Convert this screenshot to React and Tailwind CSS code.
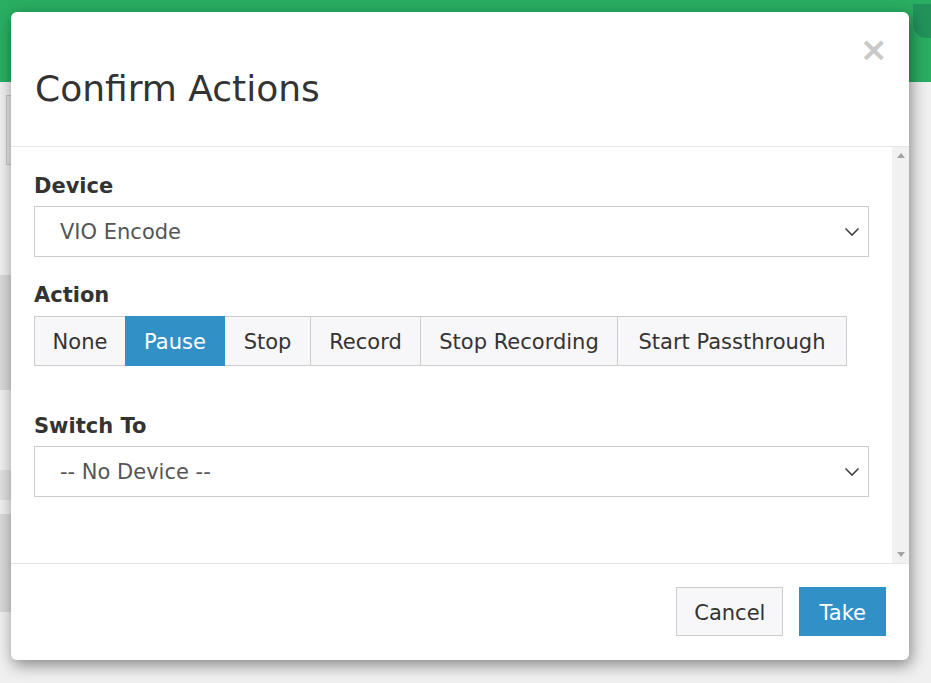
import React from "react";

const font = { fontFamily: '"DejaVu Sans", Verdana, sans-serif' };

function Chevron() {
  return (
    <svg width="16" height="10" viewBox="0 0 16 10" className="shrink-0">
      <path d="M1.5 1.5 L8 8 L14.5 1.5" fill="none" stroke="#444" strokeWidth="1.6" />
    </svg>
  );
}

function SelectBox({ value }) {
  return (
    <div className="h-[51px] border border-[#cccccc] bg-white flex items-center justify-between pl-[25px] pr-[8px] text-[21px] text-[#555555]">
      <span className="pt-[3px]">{value}</span>
      <Chevron />
    </div>
  );
}

const actions = [
  { label: "None", w: "w-[92px]" },
  { label: "Pause", w: "w-[100px]" },
  { label: "Stop", w: "w-[87px]" },
  { label: "Record", w: "w-[111px]" },
  { label: "Stop Recording", w: "w-[198px]" },
  { label: "Start Passthrough", w: "w-[230px]" },
];

export default function App() {
  return (
    <div className="relative w-[931px] h-[683px] overflow-hidden bg-[#f0f0f0]" style={font}>
      {/* backdrop page */}
      <div className="h-[82px] bg-[#29ae62]"></div>
      <div className="flex flex-col w-[11px]">
        <div className="mt-[13px] ml-[6px] w-[40px] h-[70px] border border-[#c4c4c4] bg-[#e4e4e4]"></div>
        <div className="mt-[110px] h-[115px] bg-[#d9d9d9]"></div>
        <div className="mt-[80px] h-[30px] bg-[#e0e0e0]"></div>
        <div className="mt-[14px] h-[98px] bg-[#d9d9d9]"></div>
      </div>
      <div className="absolute right-0 top-[4px] w-[18px] h-[34px] bg-[#22925a] rounded-bl-[14px]"></div>

      {/* modal */}
      <div className="absolute left-[11px] top-[12px] w-[898px] h-[648px] bg-white rounded-[6px] shadow-[2px_5px_16px_rgba(0,0,0,0.45)] flex flex-col overflow-hidden">
        <div className="relative h-[135px] border-b border-[#e5e5e5] pl-[24px] pt-[55px] shrink-0">
          <h4 className="text-[36px] leading-[44px] text-[#333333] font-normal">Confirm Actions</h4>
          <button className="absolute top-[20px] right-[21px] text-[34px] leading-[34px] font-bold text-[#c9c9c9]">×</button>
        </div>

        <div className="flex h-[416px] shrink-0">
          <div className="flex-1 pl-[23px] pr-[23px] pt-[24px]">
            <div className="text-[21px] leading-[30px] font-bold text-[#333333] mb-[5px]">Device</div>
            <SelectBox value="VIO Encode" />
            <div className="mt-[23px] text-[21px] leading-[30px] font-bold text-[#333333] mb-[6px]">Action</div>
            <div className="flex">
              {actions.map((a, i) => (
                <div
                  key={a.label}
                  className={
                    "h-[50px] pt-[4px] flex items-center justify-center text-[21px] border " +
                    a.w +
                    (i > 0 ? " -ml-px " : " ") +
                    (a.label === "Pause"
                      ? "bg-[#3191c7] border-[#3191c7] text-white relative"
                      : "bg-[#f7f7f9] border-[#cccccc] text-[#333333]")
                  }
                >
                  {a.label}
                </div>
              ))}
            </div>
            <div className="mt-[45px] text-[21px] leading-[30px] font-bold text-[#333333] mb-[5px]">Switch To</div>
            <SelectBox value="-- No Device --" />
          </div>
          <div className="w-[17px] bg-[#f1f1f1] flex flex-col items-center justify-between py-[6px]">
            <svg width="8" height="5" viewBox="0 0 8 5"><path d="M0 5 L4 0 L8 5 Z" fill="#a3a3a3" /></svg>
            <svg width="8" height="5" viewBox="0 0 8 5"><path d="M0 0 L4 5 L8 0 Z" fill="#a3a3a3" /></svg>
          </div>
        </div>

        <div className="flex-1 border-t border-[#e5e5e5] flex justify-end items-start pt-[23px] pr-[23px] gap-[16px]">
          <button className="h-[49px] px-[17px] pt-[4px] border border-[#cccccc] bg-[#f7f7f9] text-[21px] text-[#333333]">Cancel</button>
          <button className="h-[49px] px-[19px] pt-[4px] border border-[#3191c7] bg-[#3191c7] text-[21px] text-white">Take</button>
        </div>
      </div>
    </div>
  );
}
